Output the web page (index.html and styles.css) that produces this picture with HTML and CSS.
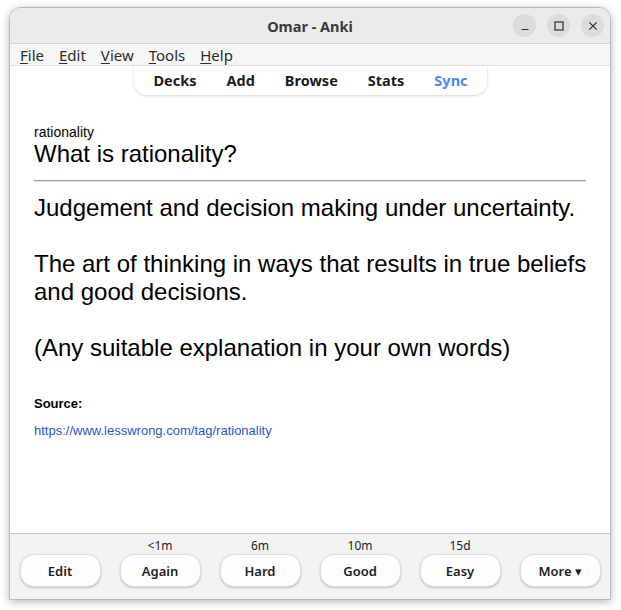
FILE: index.html
```html
<!DOCTYPE html>
<html>
<head>
<meta charset="utf-8">
<link rel="stylesheet" href="styles.css">
</head>
<body>
<div class="window">
  <header class="titlebar">
    <div class="spacer"></div>
    <div class="title">Omar - Anki</div>
    <div class="controls">
      <span class="ctl"><svg width="12" height="12" viewBox="0 0 12 12"><path d="M2.5 9.5h7" stroke="#2e2e2e" stroke-width="1.2"/></svg></span>
      <span class="ctl"><svg width="12" height="12" viewBox="0 0 12 12"><rect x="2" y="2" width="8" height="8" fill="none" stroke="#2e2e2e" stroke-width="1.2"/></svg></span>
      <span class="ctl"><svg width="12" height="12" viewBox="0 0 12 12"><path d="M2.3 2.3l7.4 7.4M9.7 2.3l-7.4 7.4" stroke="#2e2e2e" stroke-width="1.2"/></svg></span>
    </div>
  </header>
  <nav class="menubar">
    <span class="menu"><u>F</u>ile</span>
    <span class="menu"><u>E</u>dit</span>
    <span class="menu"><u>V</u>iew</span>
    <span class="menu"><u>T</u>ools</span>
    <span class="menu"><u>H</u>elp</span>
  </nav>
  <main class="main">
    <div class="toolbar-row">
      <nav class="toolbar">
        <span class="tb">Decks</span>
        <span class="tb">Add</span>
        <span class="tb">Browse</span>
        <span class="tb">Stats</span>
        <span class="tb sync">Sync</span>
      </nav>
    </div>
    <div class="card">
      <div class="tags">rationality</div>
      <div class="question">What is rationality?</div>
      <hr class="answer-sep">
      <div class="answer">Judgement and decision making under uncertainty.<br><br>The art of thinking in ways that results in true beliefs and good decisions.<br><br>(Any suitable explanation in your own words)</div>
      <div class="source">
        <p class="src-label">Source:</p>
        <p class="src-link"><a href="#">https://www.lesswrong.com/tag/rationality</a></p>
      </div>
    </div>
  </main>
  <footer class="bottombar">
    <div class="col"><div class="due"></div><button class="btn">Edit</button></div>
    <div class="col"><div class="due">&lt;1m</div><button class="btn">Again</button></div>
    <div class="col"><div class="due">6m</div><button class="btn">Hard</button></div>
    <div class="col"><div class="due">10m</div><button class="btn">Good</button></div>
    <div class="col"><div class="due">15d</div><button class="btn">Easy</button></div>
    <div class="col"><div class="due"></div><button class="btn">More ▾</button></div>
  </footer>
</div>
</body>
</html>
```

FILE: styles.css
```css
html, body {
  margin: 0;
  padding: 0;
  background: #ffffff;
}

body {
  padding: 7px 10px 10px 9px;
  font-family: "Noto Sans", "DejaVu Sans", sans-serif;
}

.window {
  width: 602px;
  height: 593px;
  box-sizing: border-box;
  border: 1px solid #b9b9b9;
  border-radius: 12px 12px 0 0;
  overflow: hidden;
  display: flex;
  flex-direction: column;
  background: #ffffff;
  box-shadow: 0 2px 9px rgba(0, 0, 0, 0.28);
}

.titlebar {
  height: 36px;
  box-sizing: border-box;
  background: #ebebeb;
  border-bottom: 1px solid #d4d4d4;
  display: grid;
  grid-template-columns: 1fr auto 1fr;
  align-items: center;
}

.title {
  font-weight: bold;
  font-size: 14.5px;
  color: #3a3a3a;
}

.controls {
  display: flex;
  justify-content: flex-end;
  gap: 11px;
  padding-right: 6px;
}

.ctl {
  width: 23px;
  height: 23px;
  border-radius: 50%;
  background: #dcdcdc;
  display: flex;
  align-items: center;
  justify-content: center;
}

.menubar {
  height: 22px;
  box-sizing: border-box;
  background: #f6f6f6;
  border-bottom: 1px solid #e4e4e4;
  display: flex;
  align-items: center;
  gap: 15px;
  padding: 1px 0 0 10px;
  font-size: 15px;
  color: #2b2b2b;
}

.menu u {
  text-underline-offset: 2px;
}

.main {
  flex: 1;
  display: flex;
  flex-direction: column;
  background: #ffffff;
}

.toolbar-row {
  display: flex;
  justify-content: center;
}

.toolbar {
  height: 29px;
  box-sizing: border-box;
  display: flex;
  align-items: center;
  gap: 30px;
  padding: 0 19px 1px;
  margin-left: 1px;
  border-radius: 0 0 13px 13px;
  background: #ffffff;
  box-shadow: 0 1px 3px rgba(0, 0, 0, 0.16);
}

.tb {
  font-weight: bold;
  font-size: 14.5px;
  color: #1c1c1c;
}

.tb.sync {
  color: #4a88f2;
}

.card {
  padding: 29px 18px 0 24px;
  font-family: "Liberation Sans", Arial, sans-serif;
  color: #000000;
}

.tags {
  font-size: 14px;
}

.question {
  font-size: 24px;
}

.answer-sep {
  margin: 12px 6px 12px 0;
  height: 0;
  border: 0;
  border-top: 1px solid #9a9a9a;
  border-bottom: 1px solid #e6e6e6;
}

.answer {
  font-size: 24px;
}

.source {
  font-size: 13px;
  margin-top: 34px;
}

.source .src-label {
  margin: 0;
  font-weight: bold;
}

.source .src-link {
  margin: 12px 0 0;
}

.src-link a {
  color: #2a55d8;
  text-decoration: none;
}

.bottombar {
  height: 66px;
  box-sizing: border-box;
  border-top: 1px solid #c9c9c9;
  background: #f3f3f3;
  display: flex;
  gap: 20px;
  padding: 3px 10px 0;
}

.col {
  display: flex;
  flex-direction: column;
  align-items: center;
  width: 80px;
}

.due {
  height: 17px;
  font-size: 12px;
  line-height: 17px;
  color: #1e1e1e;
}

.btn {
  width: 81px;
  height: 33px;
  border-radius: 14px;
  border: 1px solid #dedede;
  background: #fdfdfd;
  box-shadow: 0 1px 2px rgba(0, 0, 0, 0.22);
  font-family: "Noto Sans", "DejaVu Sans", sans-serif;
  font-size: 13px;
  font-weight: 600;
  color: #1e1e1e;
  padding: 0;
}
```
